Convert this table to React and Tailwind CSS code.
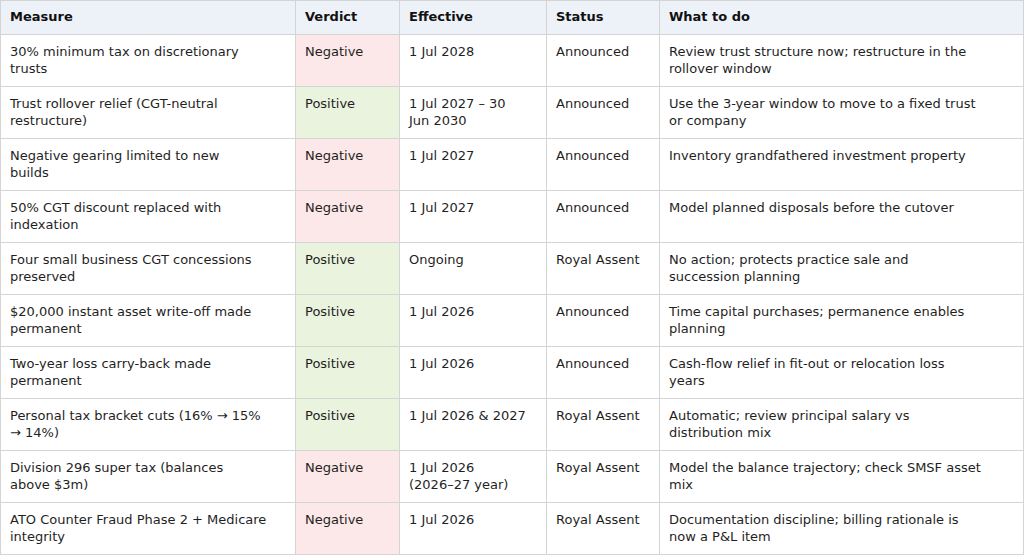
const rows = [
  [["30% minimum tax on discretionary", "trusts"], "Negative", ["1 Jul 2028"], "Announced", ["Review trust structure now; restructure in the", "rollover window"]],
  [["Trust rollover relief (CGT-neutral", "restructure)"], "Positive", ["1 Jul 2027 – 30", "Jun 2030"], "Announced", ["Use the 3-year window to move to a fixed trust", "or company"]],
  [["Negative gearing limited to new", "builds"], "Negative", ["1 Jul 2027"], "Announced", ["Inventory grandfathered investment property"]],
  [["50% CGT discount replaced with", "indexation"], "Negative", ["1 Jul 2027"], "Announced", ["Model planned disposals before the cutover"]],
  [["Four small business CGT concessions", "preserved"], "Positive", ["Ongoing"], "Royal Assent", ["No action; protects practice sale and", "succession planning"]],
  [["$20,000 instant asset write-off made", "permanent"], "Positive", ["1 Jul 2026"], "Announced", ["Time capital purchases; permanence enables", "planning"]],
  [["Two-year loss carry-back made", "permanent"], "Positive", ["1 Jul 2026"], "Announced", ["Cash-flow relief in fit-out or relocation loss", "years"]],
  [["Personal tax bracket cuts (16% → 15%", "→ 14%)"], "Positive", ["1 Jul 2026 & 2027"], "Royal Assent", ["Automatic; review principal salary vs", "distribution mix"]],
  [["Division 296 super tax (balances", "above $3m)"], "Negative", ["1 Jul 2026", "(2026–27 year)"], "Royal Assent", ["Model the balance trajectory; check SMSF asset", "mix"]],
  [["ATO Counter Fraud Phase 2 + Medicare", "integrity"], "Negative", ["1 Jul 2026"], "Royal Assent", ["Documentation discipline; billing rationale is", "now a P&L item"]],
];

const headers = ["Measure", "Verdict", "Effective", "Status", "What to do"];

const Lines = ({ lines }) =>
  lines.map((l, i) => (
    <span key={i} className="block whitespace-nowrap">
      {l}
    </span>
  ));

export default function App() {
  return (
    <div className="bg-white w-[1024px] h-[556px] overflow-hidden" style={{ fontFamily: '"DejaVu Sans", sans-serif' }}>
      <table className="table-fixed border-collapse w-[1023px] text-[13px] text-[#1f1f1f]">
        <colgroup>
          <col className="w-[295px]" />
          <col className="w-[104px]" />
          <col className="w-[147px]" />
          <col className="w-[113px]" />
          <col className="w-[364px]" />
        </colgroup>
        <thead>
          <tr className="bg-[#edf2f9]">
            {headers.map((h) => (
              <th key={h} className="border border-[#d4d4d4] pl-[9px] pr-[10px] pt-[7px] pb-[8px] text-left font-bold text-[#111] leading-[17.5px]">
                {h}
              </th>
            ))}
          </tr>
        </thead>
        <tbody>
          {rows.map((r) => (
            <tr key={r[0][0]}>
              <td className="border border-[#d4d4d4] pl-[9px] pr-[10px] pt-[8px] align-top leading-[17.5px] h-[52px]">
                <Lines lines={r[0]} />
              </td>
              <td className={"border border-[#d4d4d4] pl-[9px] pr-[10px] pt-[8px] align-top leading-[17.5px] h-[52px] " + (r[1] === "Negative" ? "bg-[#fce8e8]" : "bg-[#eaf3de]")}>
                {r[1]}
              </td>
              <td className="border border-[#d4d4d4] pl-[9px] pr-[10px] pt-[8px] align-top leading-[17.5px] h-[52px]">
                <Lines lines={r[2]} />
              </td>
              <td className="border border-[#d4d4d4] pl-[9px] pr-[10px] pt-[8px] align-top leading-[17.5px] h-[52px]">
                {r[3]}
              </td>
              <td className="border border-[#d4d4d4] pl-[9px] pr-[10px] pt-[8px] align-top leading-[17.5px] h-[52px]">
                <Lines lines={r[4]} />
              </td>
            </tr>
          ))}
        </tbody>
      </table>
    </div>
  );
}
